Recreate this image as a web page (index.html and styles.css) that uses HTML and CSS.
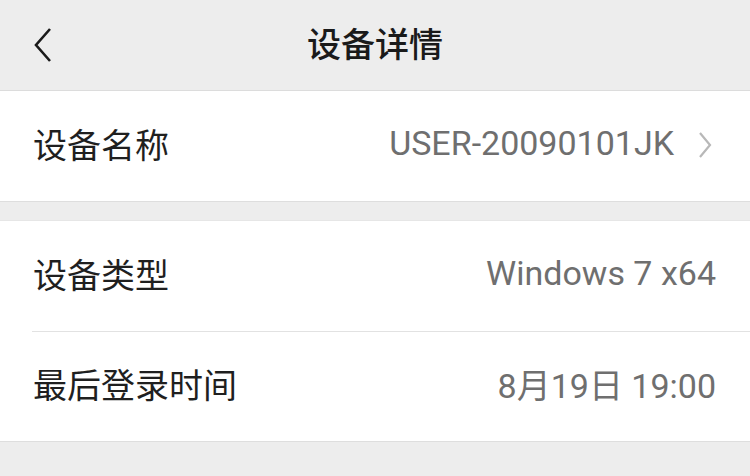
FILE: index.html
```html
<!DOCTYPE html>
<html lang="zh">
<head>
<meta charset="utf-8">
<link rel="stylesheet" href="styles.css">
</head>
<body>
<div class="page">
  <header class="nav">
    <span class="back">
      <svg width="20" height="36" viewBox="0 0 20 36"><path d="M17 2 L3 18 L17 34" fill="none" stroke="#1a1a1a" stroke-width="2.6"/></svg>
    </span>
    <h1 class="title">设备详情</h1>
  </header>
  <section class="card">
    <div class="row">
      <span class="label">设备名称</span>
      <span class="value">USER-20090101JK</span>
      <svg class="arrow" width="14" height="26" viewBox="0 0 14 26"><path d="M2 1 L12 13 L2 25" fill="none" stroke="#b8b8b8" stroke-width="2.2"/></svg>
    </div>
  </section>
  <section class="card">
    <div class="row">
      <span class="label">设备类型</span>
      <span class="value">Windows 7 x64</span>
    </div>
    <div class="row divided">
      <span class="label">最后登录时间</span>
      <span class="value">8月19日 19:00</span>
    </div>
  </section>
</div>
</body>
</html>
```
FILE: styles.css
```css
* { box-sizing: border-box; margin: 0; padding: 0; }
html, body { background: #ededed; }
body { font-family: "Noto Sans CJK SC", "Noto Sans", sans-serif; }
.page { width: 750px; height: 476px; overflow: hidden; }
.nav {
  height: 91px;
  display: flex;
  align-items: center;
  justify-content: center;
  position: relative;
  border-bottom: 1px solid #dcdcdc;
  padding-bottom: 6px;
}
.back { position: absolute; left: 33px; top: 27px; }
.title { font-size: 34px; font-weight: 500; color: #1a1a1a; letter-spacing: 0; }
.card {
  background: #fff;
  border-bottom: 1px solid #dedede;
  margin-bottom: 18px;
}
.card + .card { border-top: 1px solid #e6e6e6; }
.row {
  height: 110px;
  display: flex;
  align-items: center;
  padding: 0 34px 6px 33px;
  position: relative;
}
.row.divided::before {
  content: "";
  position: absolute;
  left: 32px; right: 0; top: 0;
  height: 1px;
  background: #e2e2e2;
}
.label { font-size: 34px; color: #1f1f1f; flex: 1; }
.value { font-family: "Roboto", "Noto Sans CJK SC", sans-serif; font-size: 34px; color: #6f6f6f; }
.arrow { margin-left: 24px; margin-right: 4px; margin-top: 4px; }
```
